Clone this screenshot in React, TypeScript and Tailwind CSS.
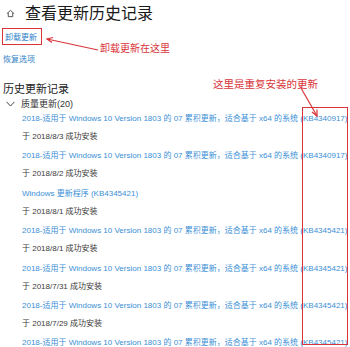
const FONT = '"Liberation Sans", "Noto Sans CJK SC", sans-serif';

type Entry = { title: string; date?: string };

const entries: Entry[] = [
  { title: '2018-适用于 Windows 10 Version 1803 的 07 累积更新，适合基于 x64 的系统 (KB4340917)', date: '于 2018/8/3 成功安装' },
  { title: '2018-适用于 Windows 10 Version 1803 的 07 累积更新，适合基于 x64 的系统 (KB4340917)', date: '于 2018/8/2 成功安装' },
  { title: 'Windows 更新程序 (KB4345421)', date: '于 2018/8/1 成功安装' },
  { title: '2018-适用于 Windows 10 Version 1803 的 07 累积更新，适合基于 x64 的系统 (KB4345421)', date: '于 2018/8/1 成功安装' },
  { title: '2018-适用于 Windows 10 Version 1803 的 07 累积更新，适合基于 x64 的系统 (KB4345421)', date: '于 2018/7/31 成功安装' },
  { title: '2018-适用于 Windows 10 Version 1803 的 07 累积更新，适合基于 x64 的系统 (KB4345421)', date: '于 2018/7/29 成功安装' },
  { title: '2018-适用于 Windows 10 Version 1803 的 07 累积更新，适合基于 x64 的系统 (KB4345421)' },
];

function HomeIcon() {
  return (
    <svg width="9" height="9" viewBox="0 0 10 10" fill="none" stroke="#555" strokeWidth="1.1">
      <path d="M1 5.2 5 1.5 9 5.2" />
      <path d="M2.5 4.2V8.5h5V4.2" />
    </svg>
  );
}

export default function App() {
  return (
    <div className="relative w-[350px] h-[347px] overflow-hidden bg-white" style={{ fontFamily: FONT }}>
      <div className="flex items-center gap-[10px] pl-[6px] pt-[3px] h-[24px]">
        <HomeIcon />
        <span className="text-[16px] leading-[20px] text-[#1a1a1a]">查看更新历史记录</span>
      </div>

      <div className="pl-[5px] pt-[9px] text-[8px] leading-[10px] text-[#2f7fc8]">卸载更新</div>
      <div className="pl-[3px] pt-[12px] text-[8px] leading-[10px] text-[#2f7fc8]">恢复选项</div>

      <div className="pl-[3px] pt-[17px] text-[11px] leading-[14px] text-[#222]">历史更新记录</div>
      <div className="flex items-center gap-[6px] pl-[6px] pt-[2px] text-[9px] leading-[12px] text-[#333]">
        <svg width="9" height="6" viewBox="0 0 9 6" fill="none" stroke="#444" strokeWidth="1">
          <path d="M0.5 0.8 4.5 5 8.5 0.8" />
        </svg>
        <span>质量更新(20)</span>
      </div>

      <div className="flex flex-col pl-[22px] pt-[4px] gap-[9.4px]">
        {entries.map((e, i) => (
          <div key={i} className="flex flex-col gap-[8px]">
            <div className="whitespace-nowrap text-[8px] leading-[10px] text-[#3b8fd6]">{e.title}</div>
            {e.date && <div className="whitespace-nowrap text-[8px] leading-[10px] text-[#3a3a3a]">{e.date}</div>}
          </div>
        ))}
      </div>

      {/* annotations */}
      <div className="absolute left-[2px] top-[28px] w-[40px] h-[17px] border border-[#d9343a]" />
      <svg className="absolute left-0 top-0" width="350" height="347" fill="none" stroke="#d9343a" strokeWidth="1.2">
        <path d="M98 50 47 39" />
        <path d="M53 37.5 47 39 52 42.5" />
        <path d="M301 88 317 116" />
        <path d="M312 112 317 116 317 109.5" />
      </svg>
      <div className="absolute left-[100px] top-[43px] text-[10px] leading-[12px] text-[#d9343a]">卸载更新在这里</div>
      <div className="absolute left-[213px] top-[78px] text-[10.5px] leading-[12px] text-[#d9343a]">这里是重复安装的更新</div>
      <div className="absolute left-[302px] top-[107px] w-[46px] h-[238px] border border-[#d9343a]" />
    </div>
  );
}
